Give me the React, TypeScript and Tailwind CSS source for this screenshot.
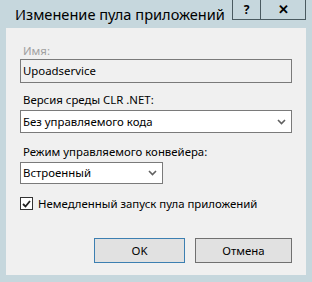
import React from "react";

function Chevron() {
  return (
    <svg width="9" height="6" viewBox="0 0 9 6" className="shrink-0">
      <path d="M1 1 L4.5 4.5 L8 1" fill="none" stroke="#606060" strokeWidth="1.6" />
    </svg>
  );
}

export default function App() {
  return (
    <div className="w-[312px] h-[282px] bg-[#c6d7dd] flex flex-col overflow-hidden" style={{ fontFamily: '"Noto Sans", "Open Sans", sans-serif' }}>
      <div className="h-[28px] flex items-start">
        <div className="pl-[15px] pt-[4px] text-[14.6px] leading-[20px] text-black">Изменение пула приложений</div>
        <div className="ml-auto mr-[6px] flex h-[20px] border-l border-b border-r border-[#4a5a60]">
          <div className="w-[28px] flex items-center justify-center text-[12px] font-bold text-black border-r border-[#4a5a60]">?</div>
          <div className="w-[44px] flex items-center justify-center text-[13px] font-bold text-black">✕</div>
        </div>
      </div>
      <div className="ml-[6px] w-[300px] h-[247px] bg-[#f0f0f0] flex flex-col px-[14px] text-[11.4px] text-black">
        <div className="mt-[15px] pl-[3px] h-[16px] leading-[16px] text-[#a0a0a0]">Имя:</div>
        <div className="h-[24px] border border-[#7a7a7a] bg-[#f0f0f0] flex items-center pl-[2px] leading-[16px]">Upoadservice</div>
        <div className="mt-[9px] pl-[3px] h-[16px] leading-[16px]">Версия среды CLR .NET:</div>
        <div className="mt-[2px] h-[23px] border border-[#7a7a7a] bg-white flex items-center pl-[2px] pr-[5px] leading-[16px]">
          <span className="flex-1">Без управляемого кода</span>
          <Chevron />
        </div>
        <div className="mt-[11px] pl-[3px] h-[16px] leading-[16px]">Режим управляемого конвейера:</div>
        <div className="mt-[2px] w-[143px] h-[22px] border border-[#7a7a7a] bg-white flex items-center pl-[2px] pr-[5px] leading-[16px]">
          <span className="flex-1">Встроенный</span>
          <Chevron />
        </div>
        <div className="mt-[13px] flex items-center h-[13px]">
          <div className="w-[13px] h-[13px] border border-[#333] bg-white flex items-center justify-center">
            <svg width="9" height="8" viewBox="0 0 9 8">
              <path d="M1 4 L3.5 6.5 L8 1" fill="none" stroke="#222" strokeWidth="1.8" />
            </svg>
          </div>
          <span className="ml-[5px] leading-[16px]">Немедленный запуск пула приложений</span>
        </div>
        <div className="mt-[28px] flex justify-end gap-[10px]">
          <button className="w-[91px] h-[25px] border border-[#3c7fb1] bg-[#e1e1e1] leading-[16px]">OK</button>
          <button className="w-[97px] h-[25px] border border-[#707070] bg-[#e1e1e1] leading-[16px]">Отмена</button>
        </div>
      </div>
    </div>
  );
}
